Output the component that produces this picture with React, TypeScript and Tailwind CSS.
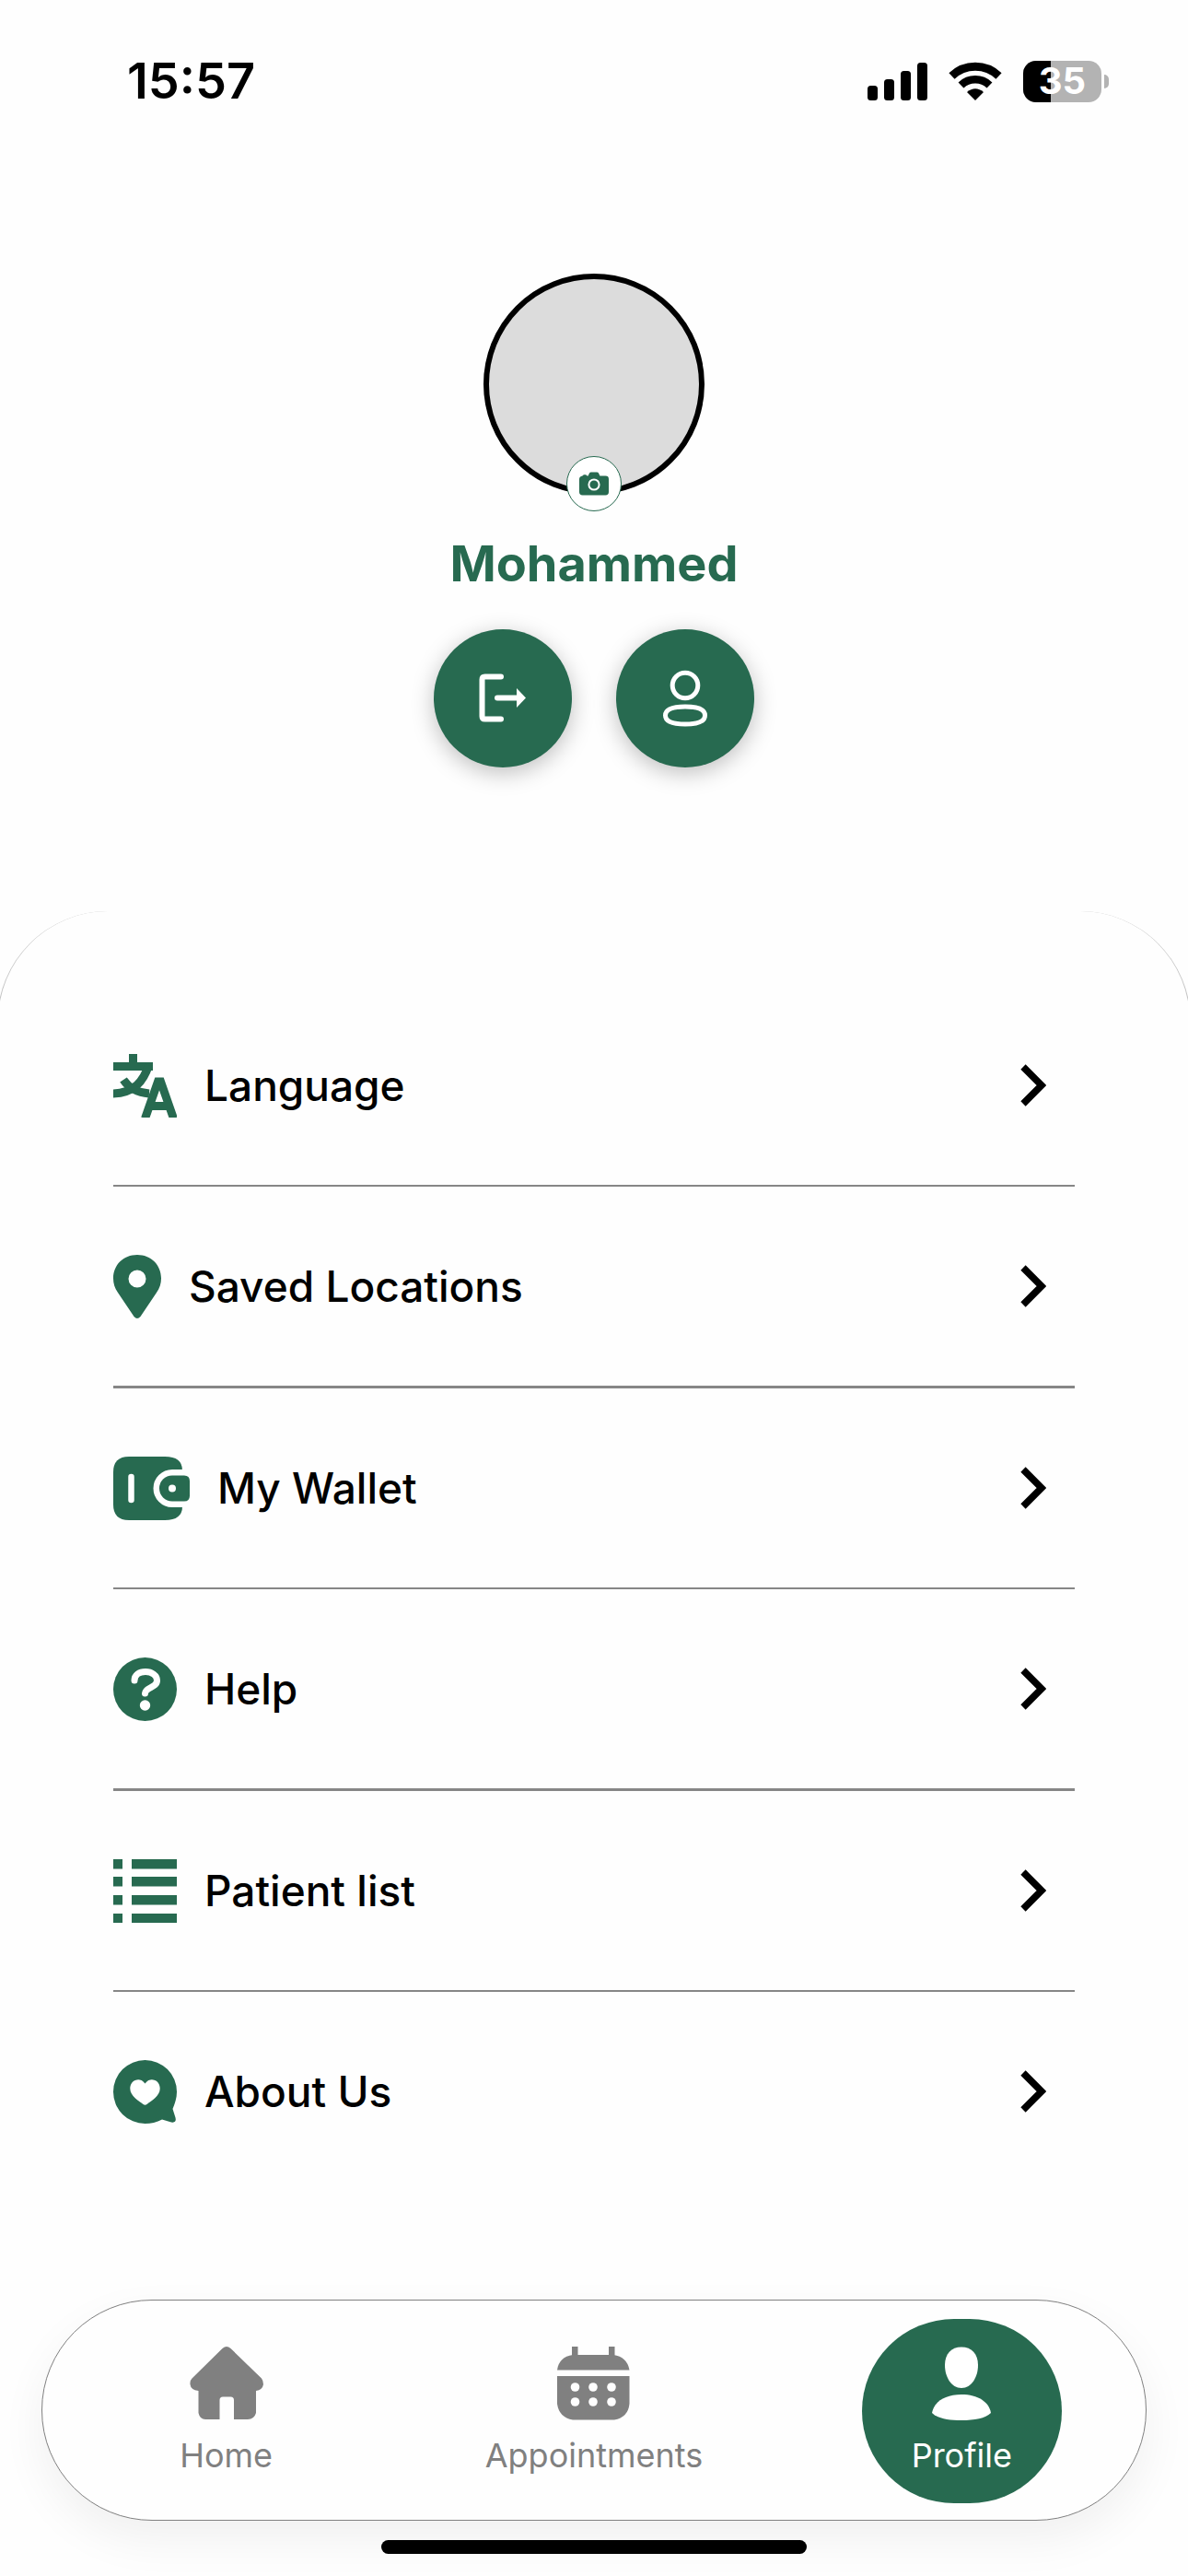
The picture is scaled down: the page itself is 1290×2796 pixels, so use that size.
import React, { type FC, type ReactNode } from "react";

const BATTERY_PERCENT = 35;

const LogoutIcon: FC = () => (
  <svg width="52" height="54" viewBox="0 0 52 54" fill="none">
    <path
      d="M24 3.5H6.5Q3.5 3.5 3.5 6.5V46.5Q3.5 49.5 6.5 49.5H24"
      stroke="white"
      strokeWidth="6"
      strokeLinecap="round"
    />
    <path d="M20 26.5H42" stroke="white" strokeWidth="6" strokeLinecap="round" />
    <path d="M41 16L51 26.5L41 37Z" fill="white" />
  </svg>
);

const UserOutlineIcon: FC = () => (
  <svg width="50" height="62" viewBox="0 0 50 62" fill="none" stroke="white" strokeWidth="5">
    <circle cx="25" cy="17" r="13.8" />
    <path d="M25 40C38 40 46.5 43 46.5 49.5S38 59 25 59S3.5 56 3.5 49.5S12 40 25 40Z" />
  </svg>
);

const CameraIcon: FC = () => (
  <svg width="32" height="26" viewBox="0 0 32 26">
    <path
      d="M3.5 4.5C4 3.4 5 3.2 6 3.2S8 3.6 8.6 4.4H9.6L11 1.6Q11.6.6 13 .6H19Q20.4.6 21 1.6L22.4 4.6H28.5Q32 4.6 32 8V22Q32 25.4 28.5 25.4H3.5Q0 25.4 0 22V8Q0 5 3.5 4.5Z"
      fill="#276a50"
    />
    <circle cx="16" cy="14" r="5.6" fill="#276a50" stroke="white" strokeWidth="2" />
  </svg>
);

const TranslateIcon: FC = () => (
  <svg
    width="69"
    height="69"
    viewBox="0 0 69 69"
    fill="none"
    stroke="#276a50"
    strokeWidth="9"
    strokeLinejoin="round"
  >
    <path d="M21.5 -2V13M-2 13.5H43" />
    <path d="M38.5 12C33 29 23 43 -2 43" />
    <path d="M11 28C17 37 26 42 39 43" />
    <path d="M34.5 70L48.5 30H51.5L65.5 70M39 56.5H61" strokeLinejoin="miter" />
  </svg>
);

const PinIcon: FC = () => (
  <svg width="52" height="69" viewBox="0 0 52 69">
    <path
      fillRule="evenodd"
      d="M26 0C11 0 0 11 0 25.5C0 31 1.5 36 5 41L22.5 67Q26 71 29.5 67L47 41C50.5 36 52 31 52 25.5C52 11 41 0 26 0ZM26 16.5A9.5 9.5 0 1 1 26 35.5A9.5 9.5 0 1 1 26 16.5Z"
      fill="#276a50"
    />
  </svg>
);

const WalletIcon: FC = () => (
  <svg width="83" height="69" viewBox="0 0 83 69">
    <path
      d="M17 0H56Q75 0 75 15V54Q75 69 56 69H17Q0 69 0 52V17Q0 0 17 0Z"
      fill="#276a50"
    />
    <path d="M19.5 22V47" stroke="#fefefe" strokeWidth="6.5" strokeLinecap="round" />
    <path
      d="M64 20.5H77Q83 20.5 83 26.5V42.5Q83 48.5 77 48.5H64A14 14 0 0 1 64 20.5Z"
      fill="#276a50"
      stroke="#fefefe"
      strokeWidth="13"
    />
    <path
      d="M64 20.5H77Q83 20.5 83 26.5V42.5Q83 48.5 77 48.5H64A14 14 0 0 1 64 20.5Z"
      fill="#276a50"
    />
    <circle cx="64" cy="34.5" r="4" fill="#fefefe" />
  </svg>
);

const HelpIcon: FC = () => (
  <svg width="69" height="69" viewBox="0 0 69 69" fill="none">
    <circle cx="34.5" cy="34.5" r="34.5" fill="#276a50" />
    <path
      d="M23 25C23 19 28 15.5 35 15.5C42 15.5 47.5 19.5 47.5 25C47.5 33 35 32 34.5 39"
      stroke="white"
      strokeWidth="7"
      strokeLinecap="round"
    />
    <circle cx="34.5" cy="52" r="5.7" fill="white" />
  </svg>
);

const LIST_BARS_Y = [0, 19, 39, 59];

const ListIcon: FC = () => (
  <svg width="69" height="69" viewBox="0 0 69 69" fill="#276a50">
    {LIST_BARS_Y.map((y) => (
      <g key={y}>
        <rect x="0" y={y} width="10" height="10.5" />
        <rect x="20" y={y} width="49" height="10.5" />
      </g>
    ))}
  </svg>
);

const HeartBubbleIcon: FC = () => (
  <svg width="69" height="69" viewBox="0 0 69 69">
    <path
      d="M34.5 0A34.5 34.5 0 0 1 69 34.5C69 42 66.5 48 64.5 53L67.5 62.5Q69 68.5 63 67.5L53 64.5C47 67.5 41 69 34.5 69A34.5 34.5 0 0 1 34.5 0Z"
      fill="#276a50"
    />
    <path
      d="M34.5 25.5C31 20.5 26.5 21 24.5 21.7C20.5 23 18.3 26.5 18.3 31C18.3 39 28 44.5 32.5 48Q34.5 49.5 36.5 48C41 44.5 50.7 39 50.7 31C50.7 26.5 48.5 23 44.5 21.7C42.5 21 38 20.5 34.5 25.5Z"
      fill="white"
    />
  </svg>
);

const ChevronIcon: FC = () => (
  <svg width="28" height="46" viewBox="0 0 28 46" fill="none" className="shrink-0">
    <path d="M3 3L23 23L3 43" stroke="black" strokeWidth="7.5" />
  </svg>
);

const HomeIcon: FC = () => (
  <svg width="80" height="80" viewBox="0 0 80 80" fill="#808080">
    <path d="M35.5 2Q40-2 44.5 2L78 34.5Q80 37 80 41Q79 47 72 48V72Q70 79 63 79H48V58Q48 54.5 44.5 54.5H36Q32.5 54.5 32.5 58V79H17Q11 79 9.5 72V48Q1 47 .5 41Q0 37 2.5 34.5Z" />
  </svg>
);

const CalendarIcon: FC = () => (
  <svg width="79" height="80" viewBox="0 0 79 80" fill="#808080">
    <rect x="16" y="-3" width="6.5" height="16" />
    <rect x="56" y="-3" width="6.5" height="16" />
    <path d="M17 9H61Q76 11 78.5 25.5H0Q2 11 17 9Z" />
    <path d="M0 32H78.5V62Q77 77 62 79.5H17Q2 77 0 62Z" />
    {[19.5, 39, 59].map((x) => (
      <g key={x} fill="#fefefe">
        <circle cx={x} cy="44" r="4.8" />
        <circle cx={x} cy="60" r="4.8" />
      </g>
    ))}
  </svg>
);

const ProfileIcon: FC = () => (
  <svg width="64" height="80" viewBox="0 0 64 80" fill="white">
    <path d="M32 .5C43 .5 50 8 50 20C50 33 43 45 32 45C21 45 14 33 14 20C14 8 21 .5 32 .5Z" />
    <path d="M32 52C50 52 62 60 64 72C58 78 46 80 32 80C18 80 6 78 0 72C2 60 14 52 32 52Z" />
  </svg>
);

const StatusBar: FC = () => (
  <header className="flex items-center justify-between pt-[58px] pr-[86px] pl-[138px]">
    <time className="text-[54px] leading-[60px] font-semibold">15:57</time>
    <div className="flex items-center gap-[23px]">
      <svg width="65" height="42" viewBox="0 0 65 42">
        <rect x="0" y="26" width="11" height="16" rx="3.5" />
        <rect x="18" y="19" width="11" height="23" rx="3.5" />
        <rect x="36" y="10" width="11" height="32" rx="3.5" />
        <rect x="54" y="1" width="11" height="41" rx="3.5" />
      </svg>
      <svg width="58" height="42" viewBox="0 0 58 42" fill="none" stroke="black">
        <path d="M3.5 15.5A37 37 0 0 1 54.5 15.5" strokeWidth="9" />
        <path d="M13.5 25.5A22.5 22.5 0 0 1 44.5 25.5" strokeWidth="8.5" />
        <path d="M29 42L20 33Q29 25.5 38 33Z" fill="black" stroke="none" />
      </svg>
      <div className="flex items-center gap-[3px]">
        <div className="grid w-[85px] grid-rows-[45px] items-center rounded-[14px] bg-[#b3b3b3]">
          <div
            className="col-start-1 row-start-1 h-[45px] rounded-l-[14px] bg-black"
            style={{ width: `${BATTERY_PERCENT}%` }}
          />
          <span className="col-start-1 row-start-1 text-center text-[40px] leading-[44px] font-bold text-white">
            {BATTERY_PERCENT}
          </span>
        </div>
        <div className="h-[15px] w-[5px] rounded-r-full bg-[#b3b3b3]" />
      </div>
    </div>
  </header>
);

interface RoundButtonProps {
  label: string;
  children: ReactNode;
}

const RoundButton: FC<RoundButtonProps> = ({ label, children }) => (
  <button
    type="button"
    aria-label={label}
    className="flex size-[150px] items-center justify-center rounded-full bg-[#276a50] shadow-[0_6px_24px_rgba(0,0,0,0.25)]"
  >
    {children}
  </button>
);

const ProfileHeader: FC = () => (
  <section className="flex flex-col items-center pt-[179px]">
    <div className="relative size-[240px] rounded-full border-6 border-black bg-[#dcdcdc]">
      <button
        type="button"
        aria-label="Change photo"
        className="absolute -bottom-6 left-1/2 flex size-[60px] -translate-x-1/2 items-center justify-center rounded-full border border-[#276a50] bg-white"
      >
        <CameraIcon />
      </button>
    </div>
    <h1 className="mt-[43px] text-[54px] leading-[64px] font-bold text-[#276a50]">Mohammed</h1>
    <div className="mt-[39px] flex gap-12">
      <RoundButton label="Log out">
        <LogoutIcon />
      </RoundButton>
      <RoundButton label="Account">
        <UserOutlineIcon />
      </RoundButton>
    </div>
  </section>
);

interface MenuItem {
  label: string;
  icon: ReactNode;
}

const menuItems: MenuItem[] = [
  { label: "Language", icon: <TranslateIcon /> },
  { label: "Saved Locations", icon: <PinIcon /> },
  { label: "My Wallet", icon: <WalletIcon /> },
  { label: "Help", icon: <HelpIcon /> },
  { label: "Patient list", icon: <ListIcon /> },
  { label: "About Us", icon: <HeartBubbleIcon /> },
];

const Menu: FC = () => (
  <ul className="-mx-[3px] mt-[156px] rounded-t-[120px] border-x border-[#c4c4c4] px-[125px] pt-[81px]">
    {menuItems.map(({ label, icon }) => (
      <li
        key={label}
        className="border-[#868686] not-last:odd:border-b-2 not-last:even:border-b-3"
      >
        <a href="#" className="flex h-[216px] items-center gap-[30px] pr-[31px]">
          {icon}
          <span className="flex-1 text-[46px] leading-[56px] font-medium">{label}</span>
          <ChevronIcon />
        </a>
      </li>
    ))}
  </ul>
);

interface TabLinkProps {
  label: string;
  icon: ReactNode;
  active?: boolean;
}

const TabLink: FC<TabLinkProps> = ({ label, icon, active = false }) => (
  <div className="flex flex-1 justify-center">
    <a
      href="#"
      aria-current={active ? "page" : undefined}
      className={`flex h-[200px] flex-col items-center gap-4 rounded-[100px] px-[54px] pt-[30px] text-[36px] leading-[44px] ${
        active ? "bg-[#276a50] text-white" : "text-[#808080]"
      }`}
    >
      {icon}
      {label}
    </a>
  </div>
);

const BottomNav: FC = () => (
  <nav className="mx-[45px] mt-auto flex h-[240px] items-center rounded-full border border-[#808080] bg-[#fefefe] pt-[2px] shadow-[0_20px_50px_rgba(0,0,0,0.06)]">
    <TabLink label="Home" icon={<HomeIcon />} />
    <TabLink label="Appointments" icon={<CalendarIcon />} />
    <TabLink label="Profile" icon={<ProfileIcon />} active />
  </nav>
);

const App: FC = () => {
  return (
    <div className="flex min-h-screen flex-col overflow-hidden bg-[#fefefe] font-['Inter',sans-serif] text-black">
      <StatusBar />
      <main>
        <ProfileHeader />
        <Menu />
      </main>
      <BottomNav />
      <div className="relative mx-auto mt-[21px] mb-6 h-[15px] w-[462px] rounded-full bg-black" />
    </div>
  );
};

export default App;
